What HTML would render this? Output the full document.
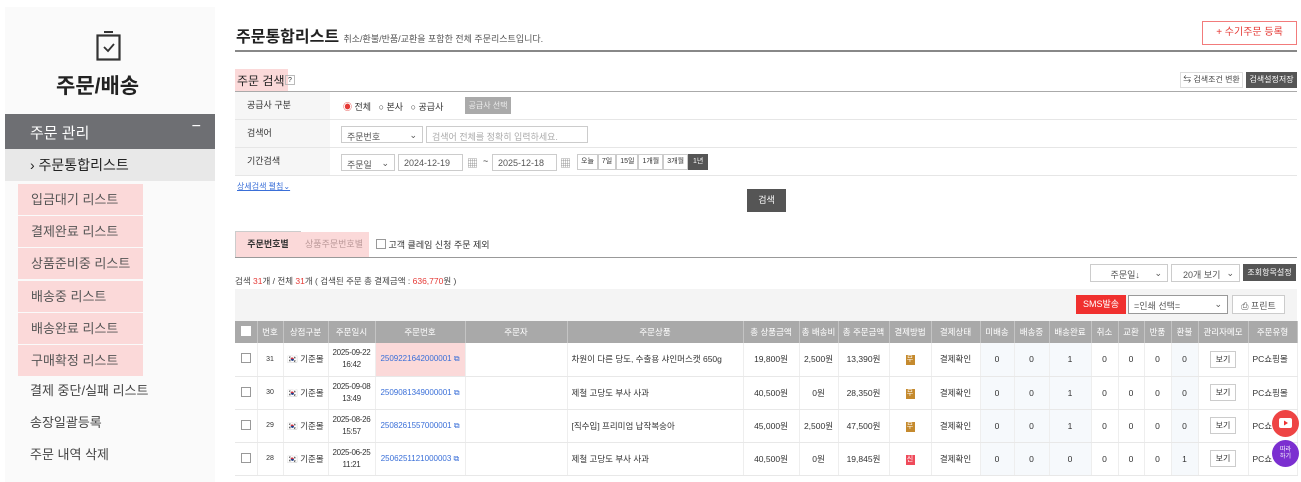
<!DOCTYPE html>
<html><head><meta charset="utf-8"><style>
*{box-sizing:border-box;margin:0;padding:0}
body{width:1301px;height:482px;overflow:hidden;background:#fff;font-family:"Liberation Sans","Noto Sans CJK KR",sans-serif;color:#333;position:relative;font-size:11px}
.a{position:absolute}
#side{left:5px;top:7px;width:210px;height:475px;background:#fafafa}
.menu{position:absolute;left:18px;width:125px;height:31px;background:#fbd9d9;color:#555;font-size:13px;padding:5px 0 0 13px}
.sm{position:absolute;left:30px;color:#444;font-size:13px}
table{border-collapse:collapse;table-layout:fixed;position:absolute;left:235px;top:321px;width:1062px}
th{background:#a9a9a9;color:#fff;font-weight:normal;font-size:8.5px;height:22px;border-right:1px solid #c4c4c4;white-space:nowrap;overflow:hidden}
td{height:33px;border-bottom:1px solid #e8e8e8;border-right:1px solid #eee;text-align:center;font-size:8.5px;color:#333;white-space:nowrap;overflow:hidden}
td.bl{background:#f6f9fc}
td.dt{font-size:8px;line-height:12px;letter-spacing:-0.3px}
.cb{display:inline-block;width:10px;height:10px;border:1px solid #999;background:#fff}
.lk{color:#3a6fd8;font-size:8px}
.pay{display:inline-block;width:9px;height:10px;background:#c58a2e;color:#fff;font-size:7px;line-height:10px}
.btn{display:inline-block;border:1px solid #ccc;padding:2px 5px;font-size:8px;background:#fff}
.row{position:absolute;left:235px;width:1062px;border-bottom:1px solid #e6e6e6}
.lab{position:absolute;left:235px;width:95px;background:#f6f6f6;font-size:9px;padding-left:12px;color:#333}
.inp{position:absolute;border:1px solid #ccc;background:#fff;font-size:9px;padding:3px 5px;height:17px;color:#555}
</style></head><body>
<div id="side" class="a"></div>
<svg class="a" style="left:96px;top:30px" width="26" height="32" viewBox="0 0 26 32"><rect x="1.5" y="5.5" width="22" height="24" fill="none" stroke="#333" stroke-width="2.2"/><rect x="8" y="1" width="9" height="2" fill="#333"/><path d="M8 17l4 4 6-7" fill="none" stroke="#333" stroke-width="1.8"/></svg>
<div class="a" style="left:56px;top:70px;font-size:21px;font-weight:bold;color:#222">주문/배송</div>
<div class="a" style="left:5px;top:114px;width:210px;height:35px;background:#6e6f73;color:#fff;font-size:15px;padding:8px 0 0 25px">주문 관리<span style="position:absolute;right:14px;top:4px;font-size:16px">−</span></div>
<div class="a" style="left:5px;top:149px;width:210px;height:32px;background:#e8e8e8;color:#222;font-size:14px;padding:6px 0 0 25px">› 주문통합리스트</div>
<div class="menu" style="top:184px">입금대기 리스트</div>
<div class="menu" style="top:216px">결제완료 리스트</div>
<div class="menu" style="top:248px">상품준비중 리스트</div>
<div class="menu" style="top:281px">배송중 리스트</div>
<div class="menu" style="top:313px">배송완료 리스트</div>
<div class="menu" style="top:345px">구매확정 리스트</div>
<div class="sm" style="top:380px">결제 중단/실패 리스트</div>
<div class="sm" style="top:412px">송장일괄등록</div>
<div class="sm" style="top:444px">주문 내역 삭제</div>

<div class="a" style="left:236px;top:23px;font-size:16px;font-weight:bold;color:#222">주문통합리스트 <span style="font-size:9px;font-weight:normal;color:#555">취소/환불/반품/교환을 포함한 전체 주문리스트입니다.</span></div>
<div class="a" style="left:1202px;top:21px;width:95px;height:24px;border:1px solid #f27b7b;color:#e53935;font-size:10px;text-align:center;line-height:22px">+ 수기주문 등록</div>
<div class="a" style="left:235px;top:50px;width:1062px;height:2px;background:#888"></div>
<div class="a" style="left:235px;top:69px;height:22px;background:#fbd9d9;font-size:12px;padding:3px 3px 0 2px;color:#222">주문 검색</div>
<div class="a" style="left:285px;top:75px;width:10px;height:10px;border:1px solid #bbb;font-size:7px;text-align:center;line-height:9px">?</div>
<div class="a" style="left:1180px;top:72px;width:63px;height:16px;border:1px solid #ddd;font-size:8px;line-height:14px;text-align:center;color:#444">⇆ 검색조건 변환</div>
<div class="a" style="left:1246px;top:72px;width:51px;height:16px;background:#555;color:#fff;font-size:8px;line-height:16px;text-align:center">검색설정저장</div>
<div class="a" style="left:235px;top:91px;width:1062px;height:1px;background:#aaa"></div>
<div class="row" style="top:92px;height:28px"></div>
<div class="row" style="top:120px;height:28px"></div>
<div class="row" style="top:148px;height:28px"></div>
<div class="lab" style="top:92px;height:27px;line-height:27px">공급사 구분</div>
<div class="lab" style="top:120px;height:27px;line-height:27px">검색어</div>
<div class="lab" style="top:148px;height:27px;line-height:27px">기간검색</div>
<div class="a" style="left:343px;top:100px;font-size:9px"><span style="color:#e53935">◉</span> 전체 &nbsp;&nbsp;○ 본사 &nbsp;&nbsp;○ 공급사</div>
<div class="a" style="left:465px;top:97px;width:46px;height:17px;background:#aaa;color:#eee;font-size:8px;line-height:17px;text-align:center">공급사 선택</div>
<div class="inp" style="left:341px;top:126px;width:82px">주문번호 <span style="float:right">⌄</span></div>
<div class="inp" style="left:426px;top:126px;width:162px;color:#aaa">검색어 전체를 정확히 입력하세요.</div>
<div class="inp" style="left:341px;top:154px;width:54px">주문일 <span style="float:right">⌄</span></div>
<div class="inp" style="left:398px;top:154px;width:65px">2024-12-19</div>
<div class="a" style="left:467px;top:155px;font-size:11px;color:#888">▦</div>
<div class="a" style="left:483px;top:156px;font-size:9px">~</div>
<div class="inp" style="left:492px;top:154px;width:65px">2025-12-18</div>
<div class="a" style="left:560px;top:155px;font-size:11px;color:#888">▦</div>
<div class="a" style="left:577px;top:154px;font-size:7px;display:flex;height:16px;line-height:14px">
<span style="border:1px solid #ccc;padding:0 3px">오늘</span><span style="border:1px solid #ccc;padding:0 3px">7일</span><span style="border:1px solid #ccc;padding:0 3px">15일</span><span style="border:1px solid #ccc;padding:0 3px">1개월</span><span style="border:1px solid #ccc;padding:0 3px">3개월</span><span style="background:#555;color:#fff;padding:0 4px;border:1px solid #555">1년</span></div>
<div class="a" style="left:237px;top:181px;font-size:8px;color:#3a6fd8;text-decoration:underline">상세검색 펼침⌄</div>
<div class="a" style="left:747px;top:189px;width:39px;height:23px;background:#555;color:#fff;font-size:9px;line-height:23px;text-align:center">검색</div>

<div class="a" style="left:235px;top:231px;width:66px;height:27px;background:#fbd9d9;border:1px solid #ccc;border-bottom:none;font-size:9px;line-height:25px;text-align:center;font-weight:bold;color:#333">주문번호별</div>
<div class="a" style="left:299px;top:232px;width:70px;height:25px;background:#fbd9d9;font-size:9px;line-height:25px;text-align:center;color:#b99">상품주문번호별</div>
<div class="a" style="left:376px;top:238px;font-size:9px"><span class="cb" style="vertical-align:-1px"></span> 고객 클레임 신청 주문 제외</div>
<div class="a" style="left:235px;top:257px;width:1062px;height:1px;background:#999"></div>
<div class="a" style="left:235px;top:275px;font-size:8.5px;color:#444">검색 <b style="color:#e53935;font-weight:normal">31</b>개 / 전체 <span style="color:#e53935">31</span>개 ( 검색된 주문 총 결제금액 : <span style="color:#e53935">636,770</span>원 )</div>
<div class="inp" style="left:1090px;top:264px;width:78px;height:18px;font-size:9px;text-align:center">주문일↓ <span style="float:right">⌄</span></div>
<div class="inp" style="left:1171px;top:264px;width:69px;height:18px;font-size:9px;text-align:center">20개 보기 <span style="float:right">⌄</span></div>
<div class="a" style="left:1243px;top:264px;width:53px;height:17px;background:#555;color:#fff;font-size:8px;line-height:17px;text-align:center">조회항목설정</div>
<div class="a" style="left:235px;top:289px;width:1062px;height:32px;background:#f4f4f4"></div>
<div class="a" style="left:1076px;top:295px;width:50px;height:19px;background:#f0302e;color:#fff;font-size:9px;line-height:19px;text-align:center">SMS발송</div>
<div class="inp" style="left:1128px;top:295px;width:100px;height:19px;border-color:#999">=인쇄 선택= <span style="float:right">⌄</span></div>
<div class="inp" style="left:1232px;top:295px;width:53px;height:19px;text-align:center">⎙ 프린트</div>

<table>
<colgroup><col style="width:22px"><col style="width:26px"><col style="width:45px"><col style="width:47px"><col style="width:90px"><col style="width:102px"><col style="width:176px"><col style="width:56px"><col style="width:39px"><col style="width:51px"><col style="width:42px"><col style="width:49px"><col style="width:34px"><col style="width:35px"><col style="width:42px"><col style="width:27px"><col style="width:26px"><col style="width:27px"><col style="width:27px"><col style="width:50px"><col style="width:49px"></colgroup>
<tr><th><span class="cb" style="border-color:#fff"></span></th><th>번호</th><th>상점구분</th><th>주문일시</th><th>주문번호</th><th>주문자</th><th>주문상품</th><th>총 상품금액</th><th>총 배송비</th><th>총 주문금액</th><th>결제방법</th><th>결제상태</th><th>미배송</th><th>배송중</th><th>배송완료</th><th>취소</th><th>교환</th><th>반품</th><th>환불</th><th>관리자메모</th><th>주문유형</th></tr>
<tr><td><span class="cb"></span></td><td style="font-size:7px">31</td><td>🇰🇷 기준몰</td><td class="dt">2025-09-22<br>16:42</td><td class="lk" style="background:#fbd9d9">2509221642000001 ⧉</td><td></td><td style="text-align:left;padding-left:4px">차원이 다른 당도, 수출용 샤인머스캣 650g</td><td>19,800원</td><td>2,500원</td><td>13,390원</td><td><span class="pay">무</span></td><td>결제확인</td><td class="bl">0</td><td class="bl">0</td><td class="bl">1</td><td>0</td><td>0</td><td>0</td><td class="bl">0</td><td><span class="btn">보기</span></td><td style="text-align:left;padding-left:4px">PC쇼핑몰</td></tr>
<tr><td><span class="cb"></span></td><td style="font-size:7px">30</td><td>🇰🇷 기준몰</td><td class="dt">2025-09-08<br>13:49</td><td class="lk">2509081349000001 ⧉</td><td></td><td style="text-align:left;padding-left:4px">제철 고당도 부사 사과</td><td>40,500원</td><td>0원</td><td>28,350원</td><td><span class="pay">무</span></td><td>결제확인</td><td class="bl">0</td><td class="bl">0</td><td class="bl">1</td><td>0</td><td>0</td><td>0</td><td class="bl">0</td><td><span class="btn">보기</span></td><td style="text-align:left;padding-left:4px">PC쇼핑몰</td></tr>
<tr><td><span class="cb"></span></td><td style="font-size:7px">29</td><td>🇰🇷 기준몰</td><td class="dt">2025-08-26<br>15:57</td><td class="lk">2508261557000001 ⧉</td><td></td><td style="text-align:left;padding-left:4px">[직수입] 프리미엄 납작복숭아</td><td>45,000원</td><td>2,500원</td><td>47,500원</td><td><span class="pay">무</span></td><td>결제확인</td><td class="bl">0</td><td class="bl">0</td><td class="bl">1</td><td>0</td><td>0</td><td>0</td><td class="bl">0</td><td><span class="btn">보기</span></td><td style="text-align:left;padding-left:4px">PC쇼</td></tr>
<tr><td><span class="cb"></span></td><td style="font-size:7px">28</td><td>🇰🇷 기준몰</td><td class="dt">2025-06-25<br>11:21</td><td class="lk">2506251121000003 ⧉</td><td></td><td style="text-align:left;padding-left:4px">제철 고당도 부사 사과</td><td>40,500원</td><td>0원</td><td>19,845원</td><td><span class="pay" style="background:#ef4a5a">신</span></td><td>결제확인</td><td class="bl">0</td><td class="bl">0</td><td class="bl">0</td><td>0</td><td>0</td><td>0</td><td class="bl">1</td><td><span class="btn">보기</span></td><td style="text-align:left;padding-left:4px">PC쇼</td></tr>
</table>
<div class="a" style="left:1272px;top:410px;width:27px;height:27px;border-radius:50%;background:#ee4444"></div>
<svg class="a" style="left:1279px;top:418px" width="13" height="10"><rect width="13" height="10" rx="2" fill="#fff"/><path d="M5 2.5v5l4-2.5z" fill="#e33"/></svg>
<div class="a" style="left:1272px;top:440px;width:27px;height:27px;border-radius:50%;background:#7b2fd0;color:#fff;font-size:6px;text-align:center;padding-top:7px;line-height:7px">따라<br>하기</div>
</body></html>
